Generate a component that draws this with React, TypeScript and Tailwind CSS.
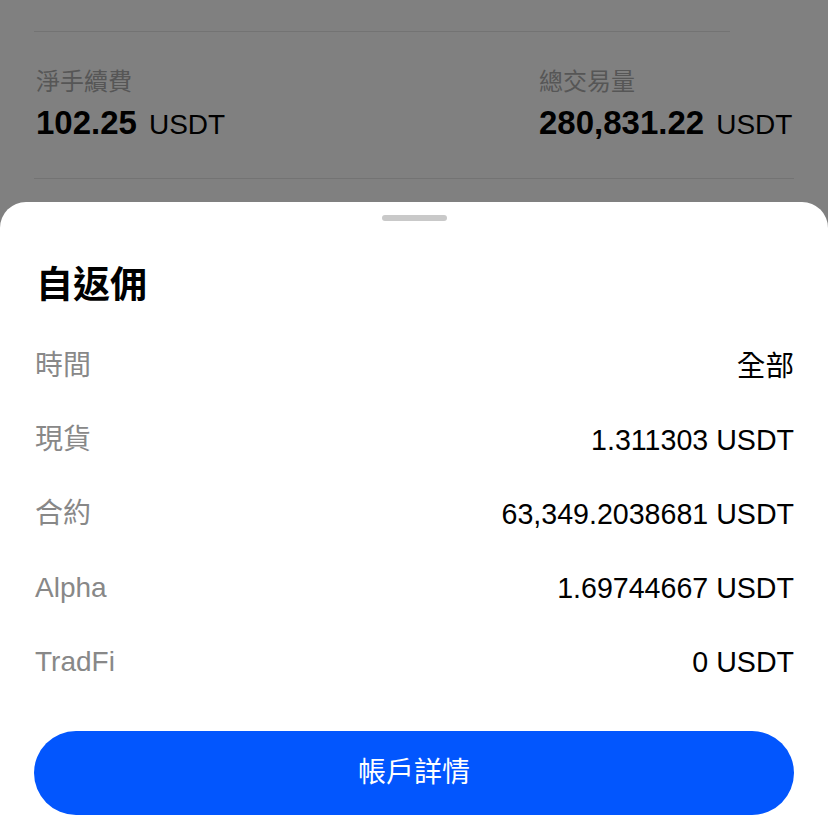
import React from "react";

const FONT = { fontFamily: "'Liberation Sans', 'Noto Sans CJK TC', sans-serif" };

type Row = { label: string; value: string };

const ROWS: Row[] = [
  { label: "時間", value: "全部" },
  { label: "現貨", value: "1.311303 USDT" },
  { label: "合約", value: "63,349.2038681 USDT" },
  { label: "Alpha", value: "1.69744667 USDT" },
  { label: "TradFi", value: "0 USDT" },
];

function Stat({ label, amount }: { label: string; amount: string }) {
  return (
    <div className="pl-[2px]">
      <p className="h-8 text-[24px] leading-8 text-[#565656]">{label}</p>
      <p className="mt-[5px] flex h-10 items-baseline gap-[12px] leading-10 text-black">
        <span className="text-[33px] font-bold">{amount}</span>
        <span className="text-[28px]">USDT</span>
      </p>
    </div>
  );
}

export default function App() {
  return (
    <div className="flex h-[836px] w-[828px] flex-col overflow-hidden bg-[#808080]" style={FONT}>
      {/* dimmed page behind the sheet */}
      <div className="h-[202px] shrink-0 px-[34px] pt-[31px]">
        <div className="h-px w-[696px] bg-[#737373]" />
        <div className="mt-[34px] flex">
          <div className="w-[503px]">
            <Stat label="淨手續費" amount="102.25" />
          </div>
          <Stat label="總交易量" amount="280,831.22" />
        </div>
        <div className="mt-[35px] h-px bg-[#737373]" />
      </div>

      {/* bottom sheet */}
      <div className="flex flex-1 flex-col rounded-t-[26px] bg-white px-[34px]">
        <div className="mx-auto mt-[13px] h-[6px] w-[65px] rounded-full bg-[#c9c9c9]" />
        <h2 className="mt-[43px] h-11 pl-[2px] text-[37px] font-bold leading-[44px] text-black">自返佣</h2>

        <div className="mt-[21px]">
          {ROWS.map((r) => (
            <div key={r.label} className="flex h-[74px] items-center justify-between">
              <span className="pl-[1px] text-[28px] text-[#888888]">{r.label}</span>
              <span className="text-[28.6px] text-black">{r.value}</span>
            </div>
          ))}
        </div>

        <button className="mt-[32px] flex h-[84px] w-full items-center justify-center rounded-full bg-[#0256fe] text-[28px] text-white">
          帳戶詳情
        </button>
      </div>
    </div>
  );
}
